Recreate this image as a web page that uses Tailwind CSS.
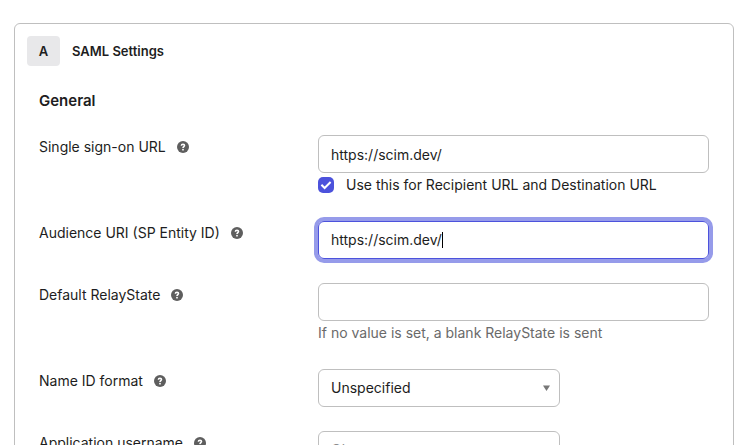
<!DOCTYPE html>
<html lang="en">
<head>
    <meta charset="UTF-8">
    <meta name="viewport" content="width=device-width, initial-scale=1.0">
    <title>SAML Settings</title>
    <script src="https://cdn.jsdelivr.net/npm/@tailwindcss/browser@4"></script>
</head>
<body class="h-screen overflow-hidden bg-white font-['Inter',sans-serif] text-sm text-[#1d1d21]">
    <svg class="hidden">
        <symbol id="help" viewBox="0 0 12 12">
            <circle cx="6" cy="6" r="6" fill="#5e5e5e" />
            <path d="M4.4 4.7C4.4 3.7 5.1 3.3 6 3.3s1.5.4 1.5 1.2C7.5 5.6 6 5.6 6 7" fill="none" stroke="#fff" stroke-width="1.6" />
            <circle cx="6" cy="8.7" r=".9" fill="#fff" />
        </symbol>
    </svg>

    <main class="ml-3.5 mr-[7px] mt-[23px] rounded-md border border-[#bfbfbf] p-3">
        <header class="flex items-center gap-3">
            <span class="flex h-[30px] w-[33px] items-center justify-center rounded-sm bg-[#e8e8ea] text-[13px] font-semibold">A</span>
            <h1 class="text-[13px] font-semibold">SAML Settings</h1>
        </header>

        <form class="px-3 pt-[25px]">
            <h2 class="mb-6 text-[15px] leading-5 font-semibold">General</h2>

            <div class="grid grid-cols-[279px_1fr] gap-y-6">
                <div class="flex h-6 items-center gap-[11px]">
                    <label for="sso">Single sign-on URL</label>
                    <button type="button" aria-label="Help"><svg class="size-3"><use href="#help" /></svg></button>
                </div>
                <div>
                    <input id="sso" type="text" value="https://scim.dev/" class="block h-[38px] w-full rounded-md border border-[#bfbfbf] px-3 outline-none">
                    <div class="flex h-6 items-center gap-3">
                        <span class="relative size-4">
                            <input id="recipient" type="checkbox" checked class="block size-4 appearance-none rounded-[5px] bg-[#4c52dc]">
                            <svg class="pointer-events-none absolute inset-0 size-4" viewBox="0 0 16 16" fill="none" stroke="#fff" stroke-width="2"><path d="M3.4 7.8l3.2 3.2 6-6" /></svg>
                        </span>
                        <label for="recipient">Use this for Recipient URL and Destination URL</label>
                    </div>
                </div>

                <div class="flex h-6 items-center gap-[11px]">
                    <label for="audience">Audience URI (SP Entity ID)</label>
                    <button type="button" aria-label="Help"><svg class="size-3"><use href="#help" /></svg></button>
                </div>
                <!-- focused field, with its caret after the text -->
                <div class="flex h-[38px] items-center rounded-md border border-[#4c52dc] px-3 ring-4 ring-[#969bea]">
                    <input id="audience" type="text" value="https://scim.dev/" class="field-sizing-content outline-none">
                    <span class="h-4 w-px bg-black"></span>
                </div>

                <div class="flex h-6 items-center gap-[11px]">
                    <label for="relay">Default RelayState</label>
                    <button type="button" aria-label="Help"><svg class="size-3"><use href="#help" /></svg></button>
                </div>
                <div>
                    <input id="relay" type="text" class="block h-[38px] w-full rounded-md border border-[#bfbfbf] px-3 outline-none">
                    <p class="leading-6 text-[#6a6a6a]">If no value is set, a blank RelayState is sent</p>
                </div>

                <div class="flex h-6 items-center gap-[11px]">
                    <label for="nameid">Name ID format</label>
                    <button type="button" aria-label="Help"><svg class="size-3"><use href="#help" /></svg></button>
                </div>
                <div class="relative w-[242px]">
                    <select id="nameid" class="block h-[38px] w-full appearance-none rounded-md border border-[#bfbfbf] px-3">
                        <option>Unspecified</option>
                    </select>
                    <svg class="pointer-events-none absolute right-2.5 top-4 h-1.5 w-[7px]" viewBox="0 0 7 6"><path d="M0 0.5h7L3.5 6z" fill="#777" /></svg>
                </div>

                <div class="flex h-6 items-center gap-[11px]">
                    <label for="username">Application username</label>
                    <button type="button" aria-label="Help"><svg class="size-3"><use href="#help" /></svg></button>
                </div>
                <div class="relative w-[242px]">
                    <select id="username" class="block h-[38px] w-full appearance-none rounded-md border border-[#bfbfbf] px-3 text-[#8c8c8c]">
                        <option>Okta username</option>
                    </select>
                    <svg class="pointer-events-none absolute right-2.5 top-4 h-1.5 w-[7px]" viewBox="0 0 7 6"><path d="M0 0.5h7L3.5 6z" fill="#777" /></svg>
                </div>
            </div>
        </form>
    </main>
</body>
</html>
